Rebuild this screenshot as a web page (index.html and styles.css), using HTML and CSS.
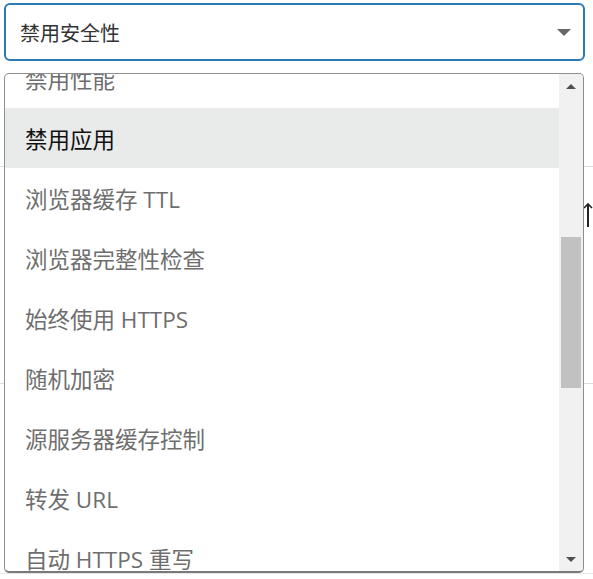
FILE: index.html
```html
<!doctype html>
<html>
<head>
    <meta charset="utf-8">
    <title>规则设置</title>
    <link rel="stylesheet" href="styles.css">
</head>

<body>
<div class="page">
    <!--下拉框-->
    <div class="select">
        <span class="select_text">禁用安全性</span>
        <span class="select_caret"></span>
    </div>

    <!--后面的表格-->
    <div class="table">
        <div class="table_row row_a"></div>
        <div class="table_row row_b">
            <svg class="sort" width="10" height="26" viewBox="0 0 10 26">
                <path d="M1 6 L5 2 L9 6" fill="none" stroke="#222" stroke-width="1.6"/>
                <path d="M5 3 V25" stroke="#222" stroke-width="2"/>
            </svg>
        </div>
        <div class="table_row row_c"></div>
    </div>

    <!--展开的选项-->
    <div class="dropdown">
        <div class="options">
            <ul class="option_list">
                <li>禁用性能</li>
                <li class="on">禁用应用</li>
                <li>浏览器缓存 TTL</li>
                <li>浏览器完整性检查</li>
                <li>始终使用 HTTPS</li>
                <li>随机加密</li>
                <li>源服务器缓存控制</li>
                <li>转发 URL</li>
                <li>自动 HTTPS 重写</li>
            </ul>
        </div>
        <div class="scrollbar">
            <span class="arrow arrow_up"></span>
            <div class="track">
                <div class="thumb"></div>
            </div>
            <span class="arrow arrow_down"></span>
        </div>
    </div>
</div>
</body>

</html>
```

FILE: styles.css
```css
body,
ul {
    margin: 0;
    padding: 0;
}

li {
    list-style: none;
}

body {
    background: #fff;
    font-family: "Open Sans", "Noto Sans CJK SC", sans-serif;
}

.page {
    width: 593px;
    height: 579px;
    position: relative;
    overflow: hidden;
}

.select {
    box-sizing: border-box;
    width: 581px;
    height: 58px;
    margin: 3px 0 0 4px;
    border: 2px solid #2b7ab0;
    border-radius: 6px;
    display: flex;
    align-items: center;
    justify-content: space-between;
    padding: 0 12px 0 14px;
}

.select_text {
    font-size: 20px;
    color: #333;
    padding-top: 1px;
}

.select_caret {
    width: 0;
    height: 0;
    border-left: 7px solid transparent;
    border-right: 7px solid transparent;
    border-top: 7px solid #666;
}

.table {
    display: flex;
    flex-direction: column;
}

.table_row {
    border-bottom: 1px solid #dcdcdc;
    display: flex;
    justify-content: flex-end;
}

.row_a {
    height: 105px;
}

.row_b {
    height: 216px;
    align-items: flex-start;
}

.row_c {
    height: 189px;
    border-bottom-color: #e6e6e6;
}

.sort {
    margin-top: 35px;
}

/*浮在表格上面*/
.dropdown {
    position: absolute;
    left: 4px;
    top: 73px;
    width: 580px;
    height: 500px;
    box-sizing: border-box;
    border: 1px solid #8e8e8e;
    border-bottom: 2px solid #7a7a7a;
    border-radius: 5px;
    background: #fff;
    display: flex;
    overflow: hidden;
}

.options {
    flex: 1;
    overflow: hidden;
}

.option_list {
    margin-top: -26px;
}

.option_list li {
    height: 60px;
    line-height: 64px;
    overflow: hidden;
    padding-left: 20px;
    font-size: 22.5px;
    color: #6e6e6e;
    white-space: nowrap;
}

.option_list .on {
    background: #e9eaea;
    color: #111;
}

.scrollbar {
    width: 24px;
    background: #f1f1f1;
    display: flex;
    flex-direction: column;
    align-items: center;
}

.arrow {
    width: 0;
    height: 0;
    border-left: 5px solid transparent;
    border-right: 5px solid transparent;
}

.arrow_up {
    margin: 10px 0 8px;
    border-bottom: 5px solid #505050;
}

.arrow_down {
    margin: 8px 0 9px;
    border-top: 5px solid #505050;
}

.track {
    flex: 1;
    width: 100%;
    padding: 0 2px;
    box-sizing: border-box;
}

.thumb {
    margin-top: 140px;
    height: 151px;
    background: #c1c1c1;
}
```
